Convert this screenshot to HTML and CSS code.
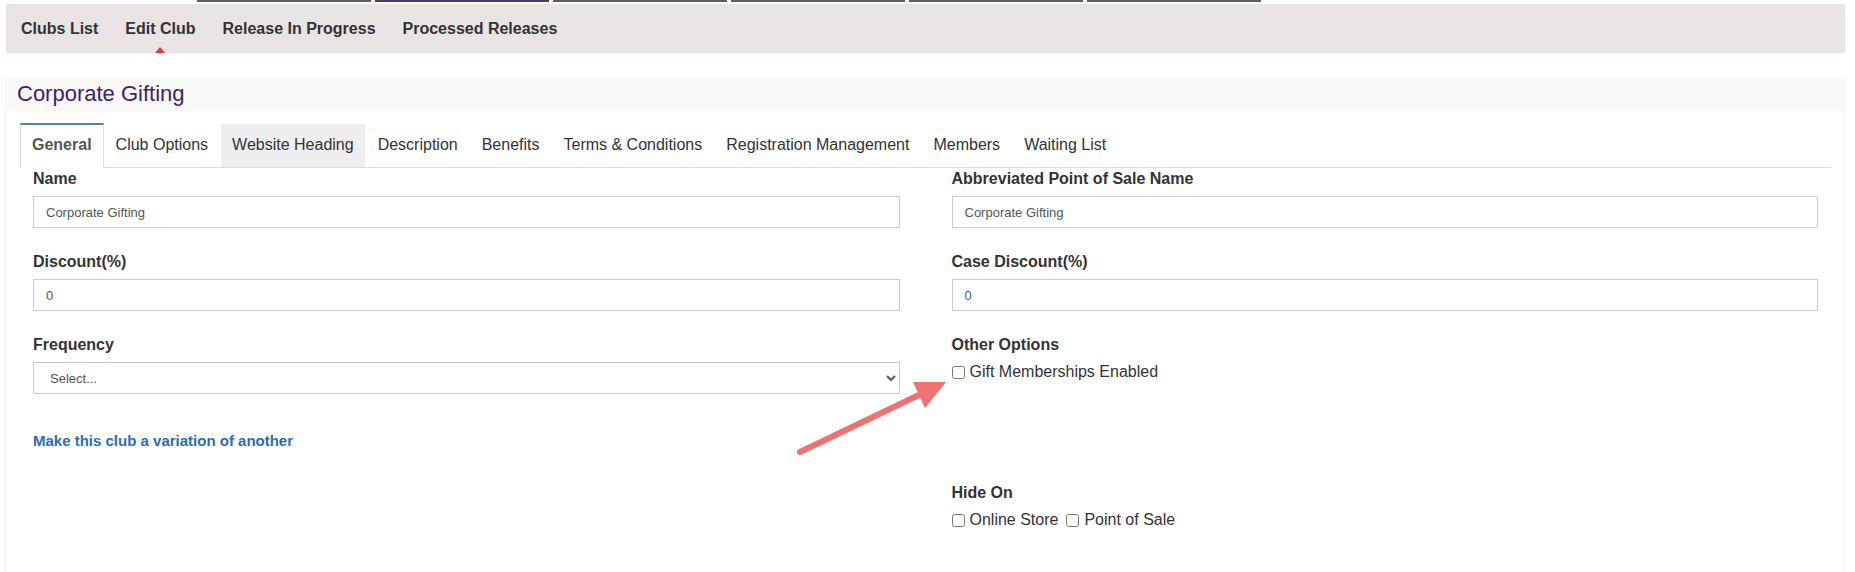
FILE: index.html
```html
<!DOCTYPE html>
<html lang="en">

<head>
  <meta charset="UTF-8">
  <meta name="viewport" content="width=device-width, initial-scale=1.0">
  <title>Edit Club</title>
  <link rel="stylesheet" href="styles.css">
</head>

<body>
  <div class="page">
    <!-- bottoms of the module tabs above -->
    <div class="module-tabs">
      <span></span>
      <span class="current"></span>
      <span></span>
      <span></span>
      <span></span>
      <span></span>
    </div>

    <nav class="subnav">
      <a href="#">Clubs List</a>
      <a href="#" class="current">Edit Club</a>
      <a href="#">Release In Progress</a>
      <a href="#">Processed Releases</a>
    </nav>

    <div class="panel">
      <h1 class="panel-title">Corporate Gifting</h1>
      <div class="panel-body">
        <ul class="tabs">
          <li><a href="#" class="active">General</a></li>
          <li><a href="#">Club Options</a></li>
          <li><a href="#" class="hover">Website Heading</a></li>
          <li><a href="#">Description</a></li>
          <li><a href="#">Benefits</a></li>
          <li><a href="#">Terms &amp; Conditions</a></li>
          <li><a href="#">Registration Management</a></li>
          <li><a href="#">Members</a></li>
          <li><a href="#">Waiting List</a></li>
        </ul>

        <form class="club-form">
          <div class="col">
            <div class="field">
              <label class="field-label" for="name">Name</label>
              <input type="text" id="name" value="Corporate Gifting">
            </div>
            <div class="field">
              <label class="field-label" for="discount">Discount(%)</label>
              <input type="text" id="discount" value="0">
            </div>
            <div class="field">
              <label class="field-label" for="frequency">Frequency</label>
              <select id="frequency">
                <option>Select...</option>
              </select>
            </div>
            <p class="variation"><a href="#">Make this club a variation of another</a></p>
          </div>

          <div class="col">
            <div class="field">
              <label class="field-label" for="posname">Abbreviated Point of Sale Name</label>
              <input type="text" id="posname" value="Corporate Gifting">
            </div>
            <div class="field">
              <label class="field-label" for="casediscount">Case Discount(%)</label>
              <input type="text" id="casediscount" value="0">
            </div>
            <div class="field">
              <span class="field-label">Other Options</span>
              <div class="checks">
                <label class="check"><input type="checkbox">Gift Memberships Enabled</label>
              </div>
            </div>
            <div class="field hide-on">
              <span class="field-label">Hide On</span>
              <div class="checks">
                <label class="check"><input type="checkbox">Online Store</label>
                <label class="check"><input type="checkbox">Point of Sale</label>
              </div>
            </div>
          </div>
        </form>
      </div>
    </div>
  </div>

  <!-- annotation arrow pointing at the checkbox -->
  <svg class="annotation" width="1855" height="572" viewBox="0 0 1855 572">
    <line x1="800" y1="452" x2="921" y2="394" stroke="#ef7171" stroke-width="6" stroke-linecap="round" />
    <polygon points="946,382 913,382 925,408" fill="#ef7171" />
  </svg>
</body>

</html>
```

FILE: styles.css
```css
* {
  box-sizing: border-box;
}

body {
  margin: 0;
  font-family: "Liberation Sans", Arial, sans-serif;
  color: #333;
  background: #fff;
}

.page {
  padding: 0 10px 0 5px;
}

.module-tabs {
  display: flex;
  gap: 4px;
  height: 4px;
  padding-left: 192px;
}

.module-tabs span {
  width: 174px;
  height: 2px;
  background: #5f5f5f;
}

.module-tabs span.current {
  background: #4a3b6e;
}

/* second level menu */
.subnav {
  display: flex;
  height: 49px;
  margin-left: 1px;
  padding-left: 1px;
  background: #e8e4e3;
}

.subnav a {
  position: relative;
  padding: 0 13.5px;
  line-height: 49px;
  font-size: 16px;
  font-weight: bold;
  color: #333;
  text-decoration: none;
}

.subnav a:first-child {
  padding-left: 14px;
}

.subnav a.current::after {
  content: "";
  position: absolute;
  left: calc(50% - 5px);
  bottom: 0;
  border-left: 5px solid transparent;
  border-right: 5px solid transparent;
  border-bottom: 6px solid #dc3b40;
}

.panel {
  margin-top: 24px;
  min-height: 495px;
  border: 1px solid #f3f3f3;
  border-top: 0;
  border-bottom: 0;
}

.panel-title {
  margin: 0;
  height: 34px;
  padding-left: 11px;
  line-height: 34px;
  font-size: 22px;
  font-weight: normal;
  color: #40206f;
  background: #f9f9f9;
}

.panel-body {
  padding: 12px 13px 0 14px;
}

.tabs {
  display: flex;
  align-items: flex-end;
  margin: 0;
  padding: 0;
  list-style: none;
  border-bottom: 1px solid #ddd;
}

.tabs a {
  display: block;
  padding: 11px 11px 12px;
  line-height: 20px;
  font-size: 16px;
  color: #333;
  text-decoration: none;
  border: 1px solid transparent;
  border-bottom: 0;
  background-clip: padding-box;
}

.tabs a.hover {
  background-color: #eee;
}

.tabs a.active {
  margin-bottom: -1px;
  padding-top: 10px;
  padding-bottom: 13px;
  font-weight: bold;
  color: #555;
  background: #fff;
  border-color: #ddd;
  border-top: 2px solid #4f8395;
}

.club-form {
  display: grid;
  grid-template-columns: 1fr 1fr;
  column-gap: 52px;
  padding: 1px 13px 0;
}

.field {
  margin-bottom: 24px;
}

.field-label {
  display: block;
  margin-bottom: 7px;
  line-height: 20px;
  font-size: 16px;
  font-weight: bold;
  color: #333;
}

.field input[type="text"],
.field select {
  display: block;
  width: 100%;
  height: 32px;
  padding: 0 12px;
  font-family: "Liberation Sans", Arial, sans-serif;
  font-size: 13px;
  color: #555;
  background: #fff;
  border: 1px solid #ccc;
  border-radius: 0;
  outline: none;
}

.checks {
  display: flex;
  gap: 8px;
}

.check {
  display: inline-flex;
  align-items: center;
  line-height: 20px;
  font-size: 16px;
  color: #333;
}

.check input {
  width: 13px;
  height: 13px;
  margin: 0 5px 0 0;
}

/* margins collapse with the field above */
.hide-on {
  margin-top: 101px;
}

.hide-on .checks {
  margin-top: 4px;
}

.variation {
  margin: 37px 0 0;
  line-height: 20px;
}

.variation a {
  font-size: 15px;
  font-weight: bold;
  color: #2a6db0;
  text-decoration: none;
}

.annotation {
  position: absolute;
  left: 0;
  top: 0;
  pointer-events: none;
}
```
